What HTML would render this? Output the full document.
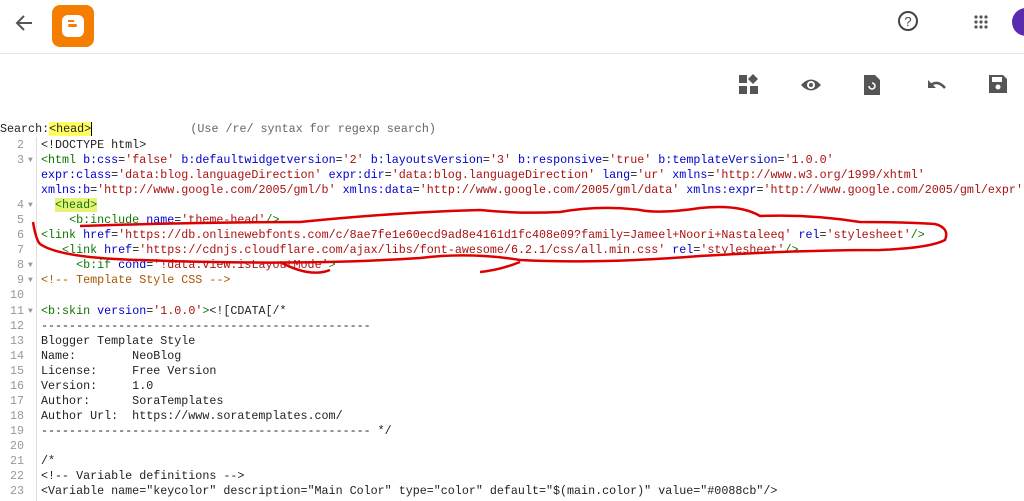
<!DOCTYPE html>
<html><head><style>
body{margin:0;width:1024px;height:501px;overflow:hidden;background:#fff;font-family:"Liberation Sans",sans-serif;position:relative}
.hdr{position:absolute;left:0;top:0;width:1024px;height:53px;border-bottom:1px solid #e6e6e6}
.code{position:absolute;left:0;top:138px;font-family:"Liberation Mono",monospace;font-size:11.7px;line-height:15.05px;color:#222}
.row{position:relative;height:15.05px;white-space:pre}
.n{position:absolute;left:0;width:24px;text-align:right;color:#999}
.f{position:absolute;left:28px;color:#999;font-size:8px}
.t{position:absolute;left:41px}
.gut{position:absolute;left:36px;top:137px;width:1px;height:364px;background:#ddd}
.g{color:#170}.b{color:#00c}.s{color:#a11}.c{color:#a50}
.search{position:absolute;top:122px;left:0;font-family:"Liberation Mono",monospace;font-size:11.7px;color:#222;white-space:pre}
</style></head><body>
<div class="hdr"></div>
<svg style="position:absolute;left:14px;top:13px" width="22" height="20"><path d="M18 10H4M10 3L3 10l7 7" stroke="#555" stroke-width="2" fill="none"/></svg>
<div style="position:absolute;left:52px;top:5px;width:42px;height:42px;background:#f57d00;border-radius:8px"></div>
<div style="position:absolute;left:62px;top:15px;width:22px;height:22px;background:#fff;border-radius:6px"></div>
<div style="position:absolute;left:68px;top:24px;width:9px;height:3px;background:#f57d00;border-radius:2px"></div>
<div style="position:absolute;left:68px;top:20px;width:6px;height:2px;background:#f57d00"></div>
<svg style="position:absolute;left:897px;top:10px" width="22" height="22"><circle cx="11" cy="11" r="9" stroke="#444" stroke-width="2" fill="none"/><text x="11" y="16" font-size="13" text-anchor="middle" fill="#444" font-family="Liberation Sans">?</text></svg>
<svg style="position:absolute;left:974px;top:15px" width="14" height="14" fill="#555"><circle cx="2" cy="2" r="1.6"/><circle cx="7" cy="2" r="1.6"/><circle cx="12" cy="2" r="1.6"/><circle cx="2" cy="7" r="1.6"/><circle cx="7" cy="7" r="1.6"/><circle cx="12" cy="7" r="1.6"/><circle cx="2" cy="12" r="1.6"/><circle cx="7" cy="12" r="1.6"/><circle cx="12" cy="12" r="1.6"/></svg>
<div style="position:absolute;left:1012px;top:8px;width:28px;height:28px;border-radius:50%;background:#5a2ab0"></div>
<svg style="position:absolute;left:738px;top:74px" width="22" height="22" fill="#555"><rect x="1" y="1" width="8" height="8"/><rect x="1" y="12" width="8" height="8"/><rect x="12" y="12" width="8" height="8"/><path d="M15 0l5 5-5 5-5-5z"/></svg>
<svg style="position:absolute;left:800px;top:77px" width="22" height="16"><path d="M1 8Q11-3 21 8Q11 19 1 8z" fill="#555"/><circle cx="11" cy="8" r="4" fill="#fff"/><circle cx="11" cy="8" r="2" fill="#555"/></svg>
<svg style="position:absolute;left:863px;top:74px" width="18" height="22"><path d="M1 1h11l5 5v15H1z" fill="#555"/><path d="M6 12a3 3 0 1 0 3-3" stroke="#fff" stroke-width="1.6" fill="none"/></svg>
<svg style="position:absolute;left:926px;top:77px" width="22" height="16"><path d="M4 9Q11 2 19 11" stroke="#555" stroke-width="2.5" fill="none"/><path d="M2 3v8h8z" fill="#555"/></svg>
<svg style="position:absolute;left:988px;top:74px" width="20" height="20"><path d="M1 1h14l4 4v14H1z" fill="#555"/><rect x="4" y="3" width="10" height="5" fill="#fff"/><circle cx="10" cy="13" r="2.5" fill="#fff"/></svg>
<div class="search">Search:<span style="background:#ffff60">&lt;head&gt;</span><span style="border-left:1px solid #000"></span>              <span style="color:#666">(Use /re/ syntax for regexp search)</span></div>
<div class="gut"></div>
<div class="code">
<div class="row"><span class="n">2</span><span class="t">&lt;!DOCTYPE html&gt;</span></div>
<div class="row"><span class="n">3</span><span class="f">▼</span><span class="t"><span class="g">&lt;html</span> <span class="b">b:css</span>=<span class="s">'false'</span> <span class="b">b:defaultwidgetversion</span>=<span class="s">'2'</span> <span class="b">b:layoutsVersion</span>=<span class="s">'3'</span> <span class="b">b:responsive</span>=<span class="s">'true'</span> <span class="b">b:templateVersion</span>=<span class="s">'1.0.0'</span></span></div>
<div class="row"><span class="t"><span class="b">expr:class</span>=<span class="s">'data:blog.languageDirection'</span> <span class="b">expr:dir</span>=<span class="s">'data:blog.languageDirection'</span> <span class="b">lang</span>=<span class="s">'ur'</span> <span class="b">xmlns</span>=<span class="s">'http://www.w3.org/1999/xhtml'</span></span></div>
<div class="row"><span class="t"><span class="b">xmlns:b</span>=<span class="s">'http://www.google.com/2005/gml/b'</span> <span class="b">xmlns:data</span>=<span class="s">'http://www.google.com/2005/gml/data'</span> <span class="b">xmlns:expr</span>=<span class="s">'http://www.google.com/2005/gml/expr'</span></span></div>
<div class="row"><span class="n">4</span><span class="f">▼</span><span class="t">  <span class="g" style="background:#e8f27a">&lt;head&gt;</span></span></div>
<div class="row"><span class="n">5</span><span class="t">    <span class="g">&lt;b:include</span> <span class="b">name</span>=<span class="s">'theme-head'</span><span class="g">/&gt;</span></span></div>
<div class="row"><span class="n">6</span><span class="t"><span class="g">&lt;link</span> <span class="b">href</span>=<span class="s">'https://db.onlinewebfonts.com/c/8ae7fe1e60ecd9ad8e4161d1fc408e09?family=Jameel+Noori+Nastaleeq'</span> <span class="b">rel</span>=<span class="s">'stylesheet'</span><span class="g">/&gt;</span></span></div>
<div class="row"><span class="n">7</span><span class="t">   <span class="g">&lt;link</span> <span class="b">href</span>=<span class="s">'https://cdnjs.cloudflare.com/ajax/libs/font-awesome/6.2.1/css/all.min.css'</span> <span class="b">rel</span>=<span class="s">'stylesheet'</span><span class="g">/&gt;</span></span></div>
<div class="row"><span class="n">8</span><span class="f">▼</span><span class="t">     <span class="g">&lt;b:if</span> <span class="b">cond</span>=<span class="s">'!data:view.isLayoutMode'</span><span class="g">&gt;</span></span></div>
<div class="row"><span class="n">9</span><span class="f">▼</span><span class="t"><span class="c">&lt;!-- Template Style CSS --&gt;</span></span></div>
<div class="row"><span class="n">10</span></div>
<div class="row"><span class="n">11</span><span class="f">▼</span><span class="t"><span class="g">&lt;b:skin</span> <span class="b">version</span>=<span class="s">'1.0.0'</span><span class="g">&gt;</span>&lt;![CDATA[/*</span></div>
<div class="row"><span class="n">12</span><span class="t">-----------------------------------------------</span></div>
<div class="row"><span class="n">13</span><span class="t">Blogger Template Style</span></div>
<div class="row"><span class="n">14</span><span class="t">Name:        NeoBlog</span></div>
<div class="row"><span class="n">15</span><span class="t">License:     Free Version</span></div>
<div class="row"><span class="n">16</span><span class="t">Version:     1.0</span></div>
<div class="row"><span class="n">17</span><span class="t">Author:      SoraTemplates</span></div>
<div class="row"><span class="n">18</span><span class="t">Author Url:  https://www.soratemplates.com/</span></div>
<div class="row"><span class="n">19</span><span class="t">----------------------------------------------- */</span></div>
<div class="row"><span class="n">20</span></div>
<div class="row"><span class="n">21</span><span class="t">/*</span></div>
<div class="row"><span class="n">22</span><span class="t">&lt;!-- Variable definitions --&gt;</span></div>
<div class="row"><span class="n">23</span><span class="t">&lt;Variable name="keycolor" description="Main Color" type="color" default="$(main.color)" value="#0088cb"/&gt;</span></div>
</div>
<svg style="position:absolute;left:0;top:0" width="1024" height="501"><path d="M33 222 Q36 240 40 244 Q60 258 140 260 Q300 266 420 258 Q470 252 520 260 Q600 264 700 256 Q800 250 880 250 Q930 248 945 240 Q950 228 935 224 Q900 222 860 222 Q810 214 760 216 Q740 204 700 208 Q660 214 640 210 Q600 205 560 212 Q520 214 480 210 Q400 212 300 222" stroke="#d00" stroke-width="2.5" fill="none"/><path d="M300 222 Q200 222 80 226" stroke="#d00" stroke-width="2.5" fill="none"/><path d="M280 262 Q310 278 330 270 M520 262 Q500 270 480 272" stroke="#d00" stroke-width="2.5" fill="none"/></svg>
</body></html>
